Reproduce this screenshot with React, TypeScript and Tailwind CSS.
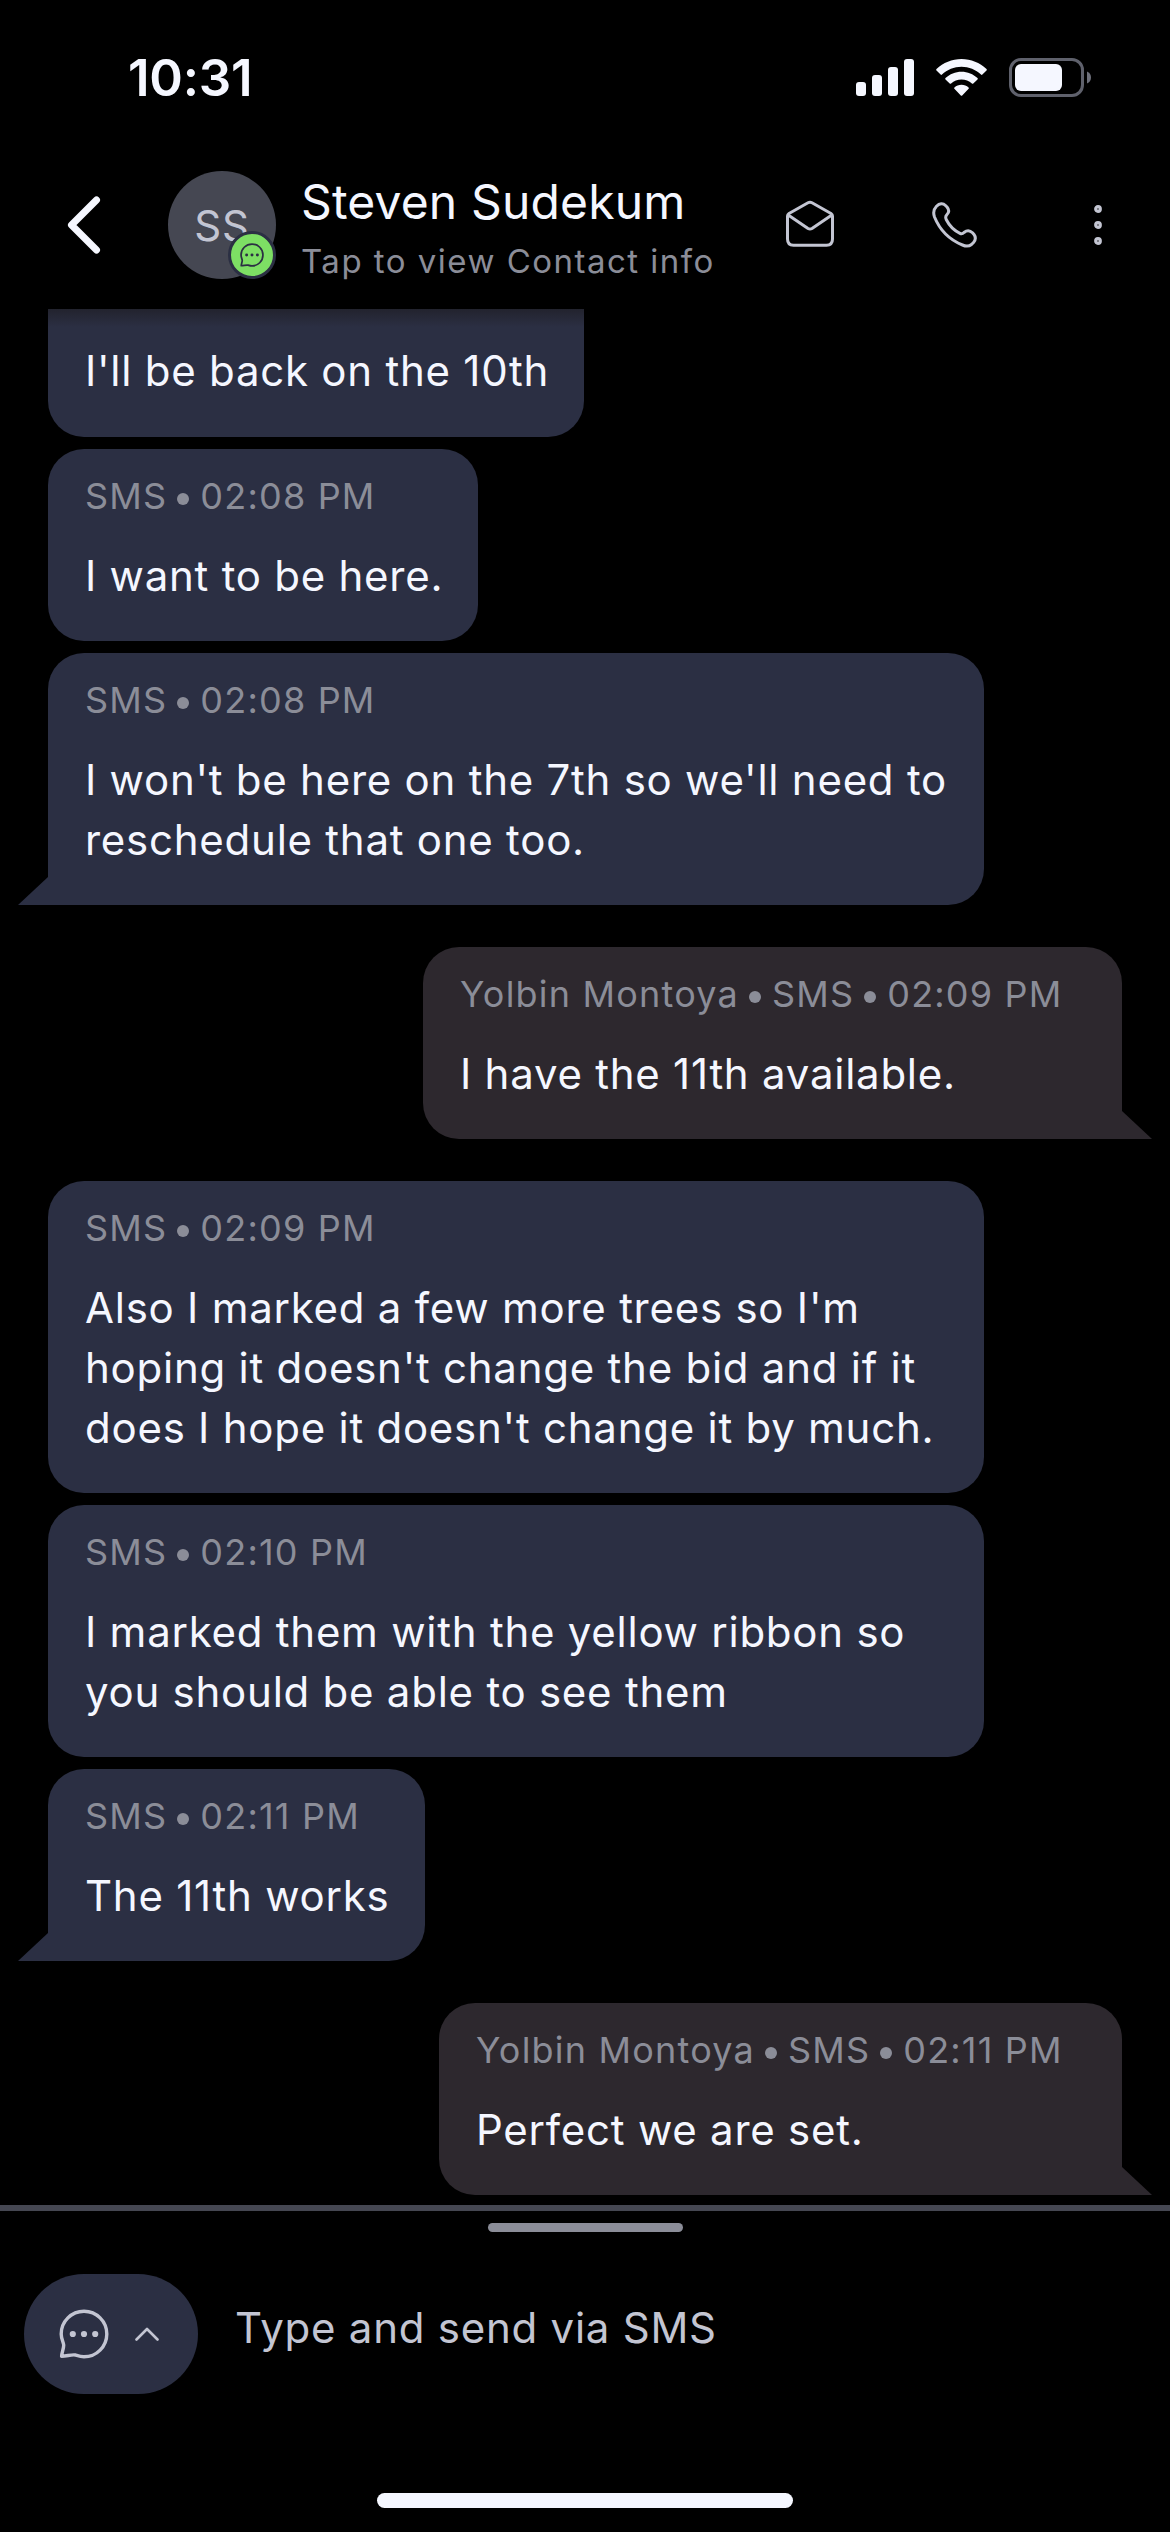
import type { ReactNode } from 'react'

type Message = {
  id: number
  from: 'them' | 'us'
  meta: string[]
  lines: string[]
  width: string
  tail?: boolean
  spaced?: boolean
}

const messages: Message[] = [
  { id: 2, from: 'them', meta: ['SMS', '02:08 PM'], lines: ['I want to be here.'], width: 'w-[430px]' },
  {
    id: 3,
    from: 'them',
    meta: ['SMS', '02:08 PM'],
    lines: ["I won't be here on the 7th so we'll need to", 'reschedule that one too.'],
    width: 'w-[936px]',
    tail: true,
  },
  {
    id: 4,
    from: 'us',
    meta: ['Yolbin Montoya', 'SMS', '02:09 PM'],
    lines: ['I have the 11th available.'],
    width: 'w-[699px]',
    tail: true,
    spaced: true,
  },
  {
    id: 5,
    from: 'them',
    meta: ['SMS', '02:09 PM'],
    lines: ["Also I marked a few more trees so I'm", "hoping it doesn't change the bid and if it", "does I hope it doesn't change it by much."],
    width: 'w-[936px]',
    spaced: true,
  },
  {
    id: 6,
    from: 'them',
    meta: ['SMS', '02:10 PM'],
    lines: ['I marked them with the yellow ribbon so', 'you should be able to see them'],
    width: 'w-[936px]',
  },
  { id: 7, from: 'them', meta: ['SMS', '02:11 PM'], lines: ['The 11th works'], width: 'w-[377px]', tail: true },
  {
    id: 8,
    from: 'us',
    meta: ['Yolbin Montoya', 'SMS', '02:11 PM'],
    lines: ['Perfect we are set.'],
    width: 'w-[683px]',
    tail: true,
    spaced: true,
  },
]

function ChatIcon({ className, strokeWidth }: { className: string; strokeWidth: number }) {
  return (
    <svg viewBox="0 0 50 50" className={className} fill="none" stroke="currentColor" strokeWidth={strokeWidth} strokeLinejoin="round">
      <path d="M2.2 25A22.8 22.8 0 1 1 25 47.8C22 47.8 19 46.8 16.5 46C12 45.3 8 47.3 2.6 47.3C2.6 44 4.8 40 4.7 36C4.6 33.5 2.2 30 2.2 25Z" />
      <g fill="currentColor" stroke="none">
        <circle cx="13.8" cy="25" r="3.1" />
        <circle cx="25" cy="25" r="3.1" />
        <circle cx="36.2" cy="25" r="3.1" />
      </g>
    </svg>
  )
}

function StatusBar() {
  return (
    <div className="flex h-[156px] justify-between pl-[128px] pr-[78px]">
      <div className="mt-[46px] text-[51px] leading-[64px] font-semibold tracking-[-0.2px]">10:31</div>
      <div className="mt-[58px] flex h-[39px]">
        <svg viewBox="0 0 59 39" className="h-[39px] w-[59px]" fill="currentColor">
          <rect x="0" y="24" width="10" height="14" rx="3" />
          <rect x="16" y="17" width="10" height="21" rx="3" />
          <rect x="32" y="9" width="10" height="29" rx="3" />
          <rect x="48" y="1" width="10" height="37" rx="3" />
        </svg>
        <svg viewBox="0 0 51 39" className="ml-[21px] h-[39px] w-[51px]" fill="currentColor">
          <path d="M25.5 1C35 1 43.8 4.7 50.5 11Q51.2 11.8 50.5 12.6L46.4 16.6Q45.7 17.2 45 16.6C39.8 11.8 32.9 8.8 25.5 8.8S11.2 11.8 6 16.6Q5.3 17.2 4.6 16.6L.5 12.6Q-.2 11.8 .5 11C7.2 4.7 16 1 25.5 1Z" />
          <path d="M25.5 13.7C31.6 13.7 37.2 16.1 41.5 20Q42.2 20.7 41.5 21.4L37.3 25.5Q36.6 26.1 35.9 25.5C33.1 23.1 29.5 21.6 25.5 21.6S17.9 23.1 15.1 25.5Q14.4 26.1 13.7 25.5L9.5 21.4Q8.8 20.7 9.5 20C13.8 16.1 19.4 13.7 25.5 13.7Z" />
          <path d="M25.5 26.7C28.2 26.7 30.7 27.7 32.6 29.4Q33.3 30.1 32.6 30.8L26.2 37.5Q25.5 38.2 24.8 37.5L18.4 30.8Q17.7 30.1 18.4 29.4C20.3 27.7 22.8 26.7 25.5 26.7Z" />
        </svg>
        <svg viewBox="0 0 83 39" className="ml-[22px] h-[39px] w-[83px]">
          <rect x="1.5" y="1.5" width="72" height="36" rx="10.5" fill="none" stroke="#5f616c" strokeWidth="3" />
          <rect x="6" y="6" width="47" height="27" rx="6" fill="#f5f7ff" />
          <path d="M78 13.5C80.5 14.5 82 16.8 82 19.5S80.5 24.5 78 25.5Z" fill="#6e707b" />
        </svg>
      </div>
    </div>
  )
}

function Header() {
  return (
    <header className="flex h-[153px]">
      <svg viewBox="0 0 34 58" className="mt-[40px] ml-[67px] h-[58px] w-[34px] shrink-0" fill="none" stroke="currentColor" strokeWidth="7" strokeLinecap="round" strokeLinejoin="round">
        <path d="M29.5 4L4.5 29L29.5 54" />
      </svg>
      <div className="relative mt-[15px] ml-[67px] flex h-[108px] w-[108px] shrink-0 items-center justify-center rounded-full bg-[#454752] text-[42px] tracking-[0.75px] text-[#c3c5d2]">
        SS
        <div className="absolute right-0 bottom-0 flex h-[48px] w-[48px] items-center justify-center rounded-full border-3 border-[#2b2f43] bg-[#7ddf64] text-[#2b2f43]">
          <ChatIcon className="h-6 w-6" strokeWidth={3.6} />
        </div>
      </div>
      <div className="mt-[16px] ml-[25px] w-[485px] shrink-0 whitespace-nowrap">
        <div className="text-[48px] leading-[60px] tracking-[0.15px]">Steven Sudekum</div>
        <div className="mt-[8px] text-[33px] leading-[42px] tracking-[1.48px] text-[#8b8d98]">Tap to view Contact info</div>
      </div>
      <svg viewBox="0 0 48 47" className="mt-[44px] h-[47px] w-[48px] shrink-0 text-[#c3c5d2]" fill="none" stroke="currentColor" strokeWidth="3" strokeLinejoin="round">
        <path d="M1.5 16Q1.5 14.5 3 13.5L22 2.8Q24 1.7 26 2.8L45 13.5Q46.5 14.5 46.5 16V39Q46.5 45.2 40.5 45.2H7.5Q1.5 45.2 1.5 39Z" />
        <path d="M2.2 15L22 28.5Q24 29.7 26 28.5L45.8 15" />
      </svg>
      <svg viewBox="0 0 45 46" className="mt-[46px] ml-[98px] h-[46px] w-[45px] shrink-0 text-[#c3c5d2]" fill="none" stroke="currentColor" strokeWidth="3" strokeLinejoin="round">
        <path d="M4.5 4.2C7.5 1.2 11 1 13.5 3.5L15 5C17.5 8 17 10.5 15 12.5C13.5 14 13.3 15.5 14.2 17.5C17.5 24 22 28.5 28 31.3C29.5 32 30.7 31.8 32 30.5C35 28 38 28.3 40.5 30.8L42 32.5C44.2 35.5 44 37.5 41.5 40.5L39.5 42.5C36.5 44.8 34 44.5 30.5 43C18 38 8 28.5 2.5 15C1 10.8 1.3 7.5 4.5 4.2Z" />
      </svg>
      <svg viewBox="0 0 10 42" className="mt-[48px] ml-[116px] h-[42px] w-[10px] shrink-0 text-[#c3c5d2]" fill="none" stroke="currentColor" strokeWidth="3.2">
        <circle cx="5" cy="5" r="2.3" />
        <circle cx="5" cy="21" r="2.3" />
        <circle cx="5" cy="37" r="2.3" />
      </svg>
    </header>
  )
}

function Meta({ parts }: { parts: string[] }) {
  return (
    <div className="flex text-[36px] leading-[45px] tracking-[1.2px] text-[#8b8d98]">
      {parts.map((part, i) => (
        <span key={part} className="flex">
          {i > 0 && <span className="mr-[11px] ml-[10px] mt-[19px] h-3 w-3 rounded-full bg-[#8b8d98]" />}
          {part}
        </span>
      ))}
    </div>
  )
}

function Bubble({ message }: { message: Message }) {
  const { from, meta, lines, width, tail, spaced } = message
  const mine = from === 'us'
  return (
    <div className={`flex ${mine ? 'justify-end' : ''} ${spaced ? 'mt-[42px]' : 'mt-3'}`}>
      <div
        className={`relative rounded-[36px] px-[37px] pt-[25px] pb-[35px] whitespace-nowrap ${width} ${mine ? 'bg-[#2d282e]' : 'bg-[#2b2f43]'} ${
          tail ? (mine ? 'rounded-br-none' : 'rounded-bl-none') : ''
        }`}
      >
        <Meta parts={meta} />
        <div className="mt-[27px] text-[42px] leading-[60px] tracking-[0.75px]">
          {lines.map((line) => (
            <div key={line}>{line}</div>
          ))}
        </div>
        {tail && (
          <svg
            viewBox="0 0 30 28"
            className={`absolute bottom-0 h-[28px] w-[30px] ${mine ? 'left-full -scale-x-100 text-[#2d282e]' : 'right-full text-[#2b2f43]'}`}
            fill="currentColor"
          >
            <path d="M0 28L30 0V28Z" />
          </svg>
        )}
      </div>
    </div>
  )
}

function Screen({ children }: { children: ReactNode }) {
  return (
    <div className="flex h-[2532px] w-[1170px] flex-col overflow-hidden bg-black font-['Inter',sans-serif] text-[#f5f7ff]">{children}</div>
  )
}

export default function App() {
  return (
    <Screen>
      <StatusBar />
      <Header />
      <main className="h-[1896px] shrink-0 px-12">
        {/* First bubble is scrolled under the header shadow */}
        <div className="h-[128px] w-[536px] rounded-b-[36px] bg-[#2b2f43] bg-linear-to-b from-[#22232e] to-[#2b2f43] to-[18px] px-[37px] pt-[32px] text-[42px] leading-[60px] tracking-[0.75px] whitespace-nowrap">
          I'll be back on the 10th
        </div>
        {messages.map((message) => (
          <Bubble key={message.id} message={message} />
        ))}
      </main>
      <footer className="flex h-[327px] shrink-0 flex-col border-t-6 border-[#454752]">
        <div className="mt-3 h-[9px] w-[195px] self-center rounded-full bg-[#8b8d98]" />
        <div className="mt-[42px] flex">
          <button className="ml-6 flex h-[120px] w-[174px] items-center rounded-full bg-[#2b2f43] pl-[35px] text-[#c3c5d2]">
            <ChatIcon className="h-[50px] w-[50px]" strokeWidth={3.4} />
            <svg viewBox="0 0 24 14" className="ml-[26px] h-[14px] w-[24px]" fill="none" stroke="currentColor" strokeWidth="2.6" strokeLinecap="round" strokeLinejoin="round">
              <path d="M1.5 12.5L12 2L22.5 12.5" />
            </svg>
          </button>
          <div className="mt-[24px] ml-[37px] text-[42px] leading-[60px] tracking-[0.75px] text-[#c3c5d2]">Type and send via SMS</div>
        </div>
        <div className="mt-[99px] h-[15px] w-[416px] self-center rounded-full bg-[#f5f7ff]" />
      </footer>
    </Screen>
  )
}
